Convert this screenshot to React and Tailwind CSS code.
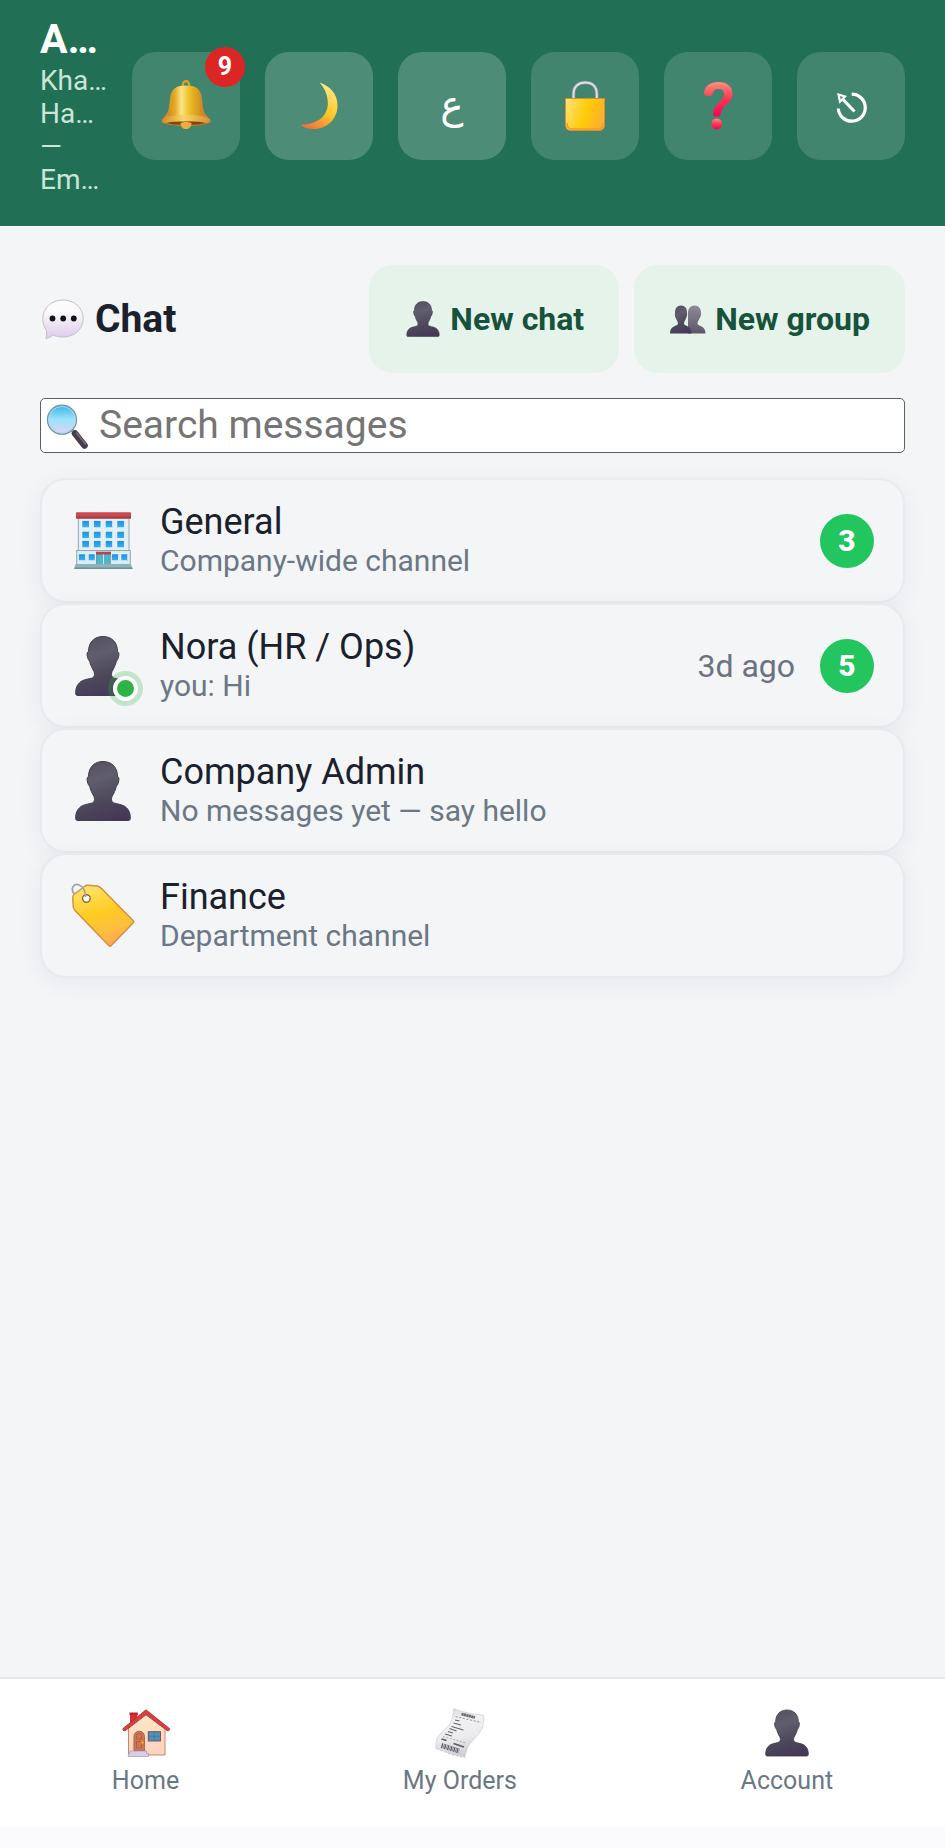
import { useState } from 'react';

const personPath =
  'M32 2.5C40.500 2.500 46.500 8 46.500 17.500C48 18 48.300 20 47.500 23C47 25.500 46 26.500 45.300 27.500C44.500 31 43 34 41 37.500C40.300 39.500 40.300 41.500 41.300 43C43.500 45 50 44.800 54 47.500C58 50.500 59.300 54 59.300 59C59.300 61 58.500 61.500 57 61.500H7C5.500 61.500 4.700 61 4.700 59C4.700 54 6 50.500 10 47.500C14 44.800 20.500 45 22.700 43C23.700 41.500 23.700 39.500 23 37.500C21 34 19.500 31 18.700 27.500C18 26.500 17 25.500 16.500 23C15.700 20 16 18 17.500 17.500C17.500 8 23.500 2.500 32 2.500Z';

// Gradients shared by all the icons below
function IconDefs() {
  return (
    <svg width="0" height="0" className="absolute" aria-hidden="true">
      <defs>
        <linearGradient id="person" x1="0.3" y1="0" x2="0.6" y2="1">
          <stop offset="0" stopColor="#55515f" />
          <stop offset="0.3" stopColor="#605d6d" />
          <stop offset="0.7" stopColor="#4b4759" />
          <stop offset="1" stopColor="#46385a" />
        </linearGradient>
        <linearGradient id="personLight" x1="0" y1="0" x2="0" y2="1">
          <stop offset="0" stopColor="#8d8c95" />
          <stop offset="1" stopColor="#5d5569" />
        </linearGradient>
        <linearGradient id="bell" x1="0" y1="0" x2="1" y2="0">
          <stop offset="0.1" stopColor="#cf8c2c" />
          <stop offset="0.25" stopColor="#e0ab22" />
          <stop offset="0.4" stopColor="#fbe484" />
          <stop offset="0.6" stopColor="#eaba1e" />
          <stop offset="0.9" stopColor="#c98327" />
        </linearGradient>
        <linearGradient id="bellRim" x1="0" y1="0" x2="1" y2="0">
          <stop offset="0" stopColor="#d48b22" />
          <stop offset="0.45" stopColor="#fbd568" />
          <stop offset="1" stopColor="#d68b34" />
        </linearGradient>
        <linearGradient id="moon" x1="0.7" y1="0" x2="0.3" y2="1">
          <stop offset="0" stopColor="#ffe98a" />
          <stop offset="0.55" stopColor="#ffc928" />
          <stop offset="1" stopColor="#f4743b" />
        </linearGradient>
        <linearGradient id="lock" x1="0" y1="0" x2="1" y2="0.3">
          <stop offset="0" stopColor="#ffe37c" />
          <stop offset="0.6" stopColor="#ffcb05" />
          <stop offset="1" stopColor="#fbb32a" />
        </linearGradient>
        <linearGradient id="question" x1="0" y1="0" x2="0" y2="1">
          <stop offset="0" stopColor="#ff8f80" />
          <stop offset="0.45" stopColor="#fb3b55" />
          <stop offset="1" stopColor="#f50057" />
        </linearGradient>
        <linearGradient id="bubble" x1="0" y1="0" x2="0" y2="1">
          <stop offset="0.3" stopColor="#fbfbfb" />
          <stop offset="1" stopColor="#ddc9ec" />
        </linearGradient>
        <linearGradient id="lens" x1="0" y1="0" x2="0" y2="1">
          <stop offset="0" stopColor="#35b7e6" />
          <stop offset="0.5" stopColor="#9de3fb" />
          <stop offset="1" stopColor="#ddd3f5" />
        </linearGradient>
        <linearGradient id="pane" x1="0" y1="0" x2="0" y2="1">
          <stop offset="0" stopColor="#1f8fe0" />
          <stop offset="1" stopColor="#37b0f3" />
        </linearGradient>
        <linearGradient id="tag" x1="0.3" y1="0" x2="0.6" y2="1">
          <stop offset="0" stopColor="#ffe36b" />
          <stop offset="0.45" stopColor="#fecb22" />
          <stop offset="0.75" stopColor="#fdbf3d" />
          <stop offset="1" stopColor="#fba45c" />
        </linearGradient>
        <linearGradient id="wall" x1="0" y1="0" x2="0" y2="1">
          <stop offset="0" stopColor="#fbe8c4" />
          <stop offset="1" stopColor="#fbd2c2" />
        </linearGradient>
        <linearGradient id="paper" x1="0" y1="0" x2="0.2" y2="1">
          <stop offset="0" stopColor="#d6d6d9" />
          <stop offset="0.3" stopColor="#f1f1f3" />
          <stop offset="0.65" stopColor="#ececef" />
          <stop offset="1" stopColor="#cfcfd6" />
        </linearGradient>
      </defs>
    </svg>
  );
}

function PersonIcon({ className }) {
  return (
    <svg viewBox="0 0 64 64" className={className} aria-hidden="true">
      <path d={personPath} fill="url(#person)" stroke="#433e4c" strokeWidth="1" />
    </svg>
  );
}

function PeopleIcon({ className }) {
  return (
    <svg viewBox="0 0 38 38" className={className} aria-hidden="true">
      <path
        d="M25.500 5.500C29.500 5.500 32 8.500 32 12.500C32.500 15 31.500 17 30.500 18.500C29.500 20.500 28.500 22 28.500 24C30 26.500 36.500 25.500 36.500 33.500H19V13C19 8.500 21.500 5.500 25.500 5.500Z"
        fill="url(#personLight)"
      />
      <path
        d="M12 5.500C16 5.500 18 8.500 18 12.500C18.500 15 17.500 17 17 18.500C16 20.500 15 22 15 24C16.500 26.500 22.500 25.500 22.500 33.500H1C1 25.500 7.500 26.500 9 24C9 22 8 20.500 7 18.500C6 17 5.500 15 6 12.500C6 8.500 8 5.500 12 5.500Z"
        fill="url(#person)"
      />
    </svg>
  );
}

function BellIcon() {
  return (
    <svg viewBox="0 0 56 56" className="size-14" aria-hidden="true">
      <circle cx="28" cy="6.500" r="3.200" fill="none" stroke="#d9a02b" strokeWidth="2.400" />
      <ellipse cx="28" cy="43.500" rx="24.500" ry="4.500" fill="#c67a20" />
      <path
        d="M28 7.500C37 7.500 42.500 10.500 43.700 18.500C45 27 44 34 50.500 39.500C45 45.500 11 45.500 5.500 39.500C12 34 11 27 12.300 18.500C13.500 10.500 19 7.500 28 7.500Z"
        fill="url(#bell)"
      />
      <path d="M4 41.500C8 35.500 48 35.500 52.500 41.500C53 44 50 45 48 45C40 42 16 42 8 45C5 45 3.500 44 4 41.500Z" fill="url(#bellRim)" />
      <path d="M9 45C17 43 39 43 47 45C41 47.500 15 47.500 9 45Z" fill="#7d4612" />
      <path d="M22.500 45.500C23 43.500 33 43.500 33.500 45.500C33.500 49 31 51 28 51C25 51 22.500 49 22.500 45.500Z" fill="#efab45" />
    </svg>
  );
}

function MoonIcon() {
  return (
    <svg viewBox="0 0 56 56" className="size-14" aria-hidden="true">
      <path
        d="M28.500 4.500C39 8 46.500 16 46.500 27.500C46.500 41 36 51 23 51C17.500 51 12 49.500 9.700 46.500C25 47 36.500 39 36.800 26C37 17 33.500 10 28.500 4.500Z"
        fill="url(#moon)"
      />
    </svg>
  );
}

function LockIcon() {
  return (
    <svg viewBox="0 0 56 56" className="size-14" aria-hidden="true">
      <path d="M16.500 22V16C16.500 8.500 21.500 4.500 28.200 4.500C35 4.500 39.800 8.500 39.800 16V22" fill="none" stroke="#8b9399" strokeWidth="3.600" />
      <path d="M16.500 22V16C16.500 8.500 21.500 4.500 28.200 4.500C35 4.500 39.800 8.500 39.800 16V22" fill="none" stroke="#dce0e4" strokeWidth="2" />
      <path d="M8.500 20.500H47.500V46C47.500 50.500 45.500 52.500 41.500 52.500H14.500C10.500 52.500 8.500 50.500 8.500 46Z" fill="url(#lock)" stroke="#e38b2a" strokeWidth="1" />
      <path d="M10 45C10 49 12 51 15 51H41C44 51 46 49 46 45" fill="none" stroke="#f29a34" strokeWidth="1.500" />
    </svg>
  );
}

function QuestionIcon() {
  return (
    <svg viewBox="0 0 56 56" className="size-14" aria-hidden="true">
      <path
        d="M14 15.500C14.500 8 20 4 28.500 4C37 4 42.500 8.500 42.500 15.500C42.500 22 38.500 24.500 34.500 28.500C31 32 31 34 30.500 36.500C30 39.500 23.500 39.500 23 36.500C23 30.500 26 27.500 29.500 24C32 21.500 34 19.500 34 16C34 12.500 32 11 28.500 11C24.500 11 23.500 13 22.500 16C21.500 19 14 18.500 14 15.500Z"
        fill="url(#question)"
      />
      <circle cx="26.700" cy="46" r="5.400" fill="url(#question)" />
    </svg>
  );
}

function ExitIcon() {
  return (
    <svg viewBox="0 0 56 56" className="size-14" fill="none" stroke="#fff" strokeWidth="3.200" aria-hidden="true">
      <path d="M28.700 16.200A13.500 13.500 0 1 1 15.300 30.500" />
      <path d="M31.500 33.500L20 21.500" />
      <path d="M15.500 16.500L22 18.500L17 23.500Z" strokeWidth="2.200" />
    </svg>
  );
}

function BubbleIcon() {
  return (
    <svg viewBox="0 0 46 46" className="size-[46px]" aria-hidden="true">
      <path
        d="M23 4C34.500 4 43.200 12 43.200 22.500C43.200 33 34.500 41 23 41C19 41 16 40.300 13 39C11 40.800 8.500 42.300 6 42.500C6.600 40 6.800 37 6.500 34.500C4 31 2.800 27 2.800 22.500C2.800 12 11.500 4 23 4Z"
        fill="url(#bubble)"
        stroke="#c5bfca"
        strokeWidth="1"
      />
      <circle cx="12.500" cy="22.500" r="2.900" fill="#151217" />
      <circle cx="23.200" cy="22.500" r="2.900" fill="#151217" />
      <circle cx="33.800" cy="22.500" r="2.900" fill="#151217" />
    </svg>
  );
}

function SearchIcon() {
  return (
    <svg viewBox="0 0 48 48" className="size-12" aria-hidden="true">
      <path d="M28.500 27.500L33 32" stroke="#9b9ca8" strokeWidth="3.500" />
      <path d="M32 31.500L41.500 43.500" stroke="#463d4c" strokeWidth="6.500" strokeLinecap="round" />
      <path d="M33.500 31L42.500 42" stroke="#766d7d" strokeWidth="1.500" strokeLinecap="round" />
      <circle cx="19" cy="17.700" r="14.500" fill="url(#lens)" stroke="#6499b3" strokeWidth="1.200" />
      <circle cx="19" cy="17.700" r="13.200" fill="none" stroke="#c4d4df" strokeWidth="0.900" />
    </svg>
  );
}

function BuildingIcon() {
  return (
    <svg viewBox="0 0 64 64" className="size-16" aria-hidden="true">
      <rect x="7.300" y="9" width="50.700" height="33" fill="#e3eff3" stroke="#93a8b1" strokeWidth="1" />
      <rect x="5" y="3.300" width="55" height="6.200" rx="1" fill="#c94a50" />
      <rect x="5" y="7.500" width="55" height="2" fill="#a83b42" />
      {[11.7, 22.3, 31.7].map((y) =>
        [11, 22.7, 34.3, 46].map((x) => (
          <rect key={`${x}-${y}`} x={x} y={y} width="7.200" height="7" fill="url(#pane)" stroke="#fff" strokeWidth="0.500" />
        ))
      )}
      <rect x="5.700" y="41.500" width="53.600" height="14" fill="#dcebef" stroke="#8fa9b0" strokeWidth="1" />
      {[7.7, 17.3, 40.7, 50].map((x) => (
        <rect key={x} x={x} y="45" width="6.700" height="6.700" fill="url(#pane)" stroke="#fff" strokeWidth="0.500" />
      ))}
      <rect x="25.700" y="45" width="13.500" height="10.500" fill="#4fb6cf" stroke="#4c8791" strokeWidth="0.800" />
      <path d="M32.500 45V55" stroke="#c5edf3" strokeWidth="1" />
      <rect x="25" y="42.700" width="15" height="2.600" fill="#bc4148" />
      <path d="M4.500 55H60L61.500 59.700H3.300Z" fill="#92b3b6" />
      <path d="M3.300 58.500H61.500V60H3.300Z" fill="#6f9296" />
    </svg>
  );
}

function TagIcon() {
  return (
    <svg viewBox="0 0 64 64" className="size-16 overflow-visible" aria-hidden="true">
      <path
        d="M16.500 1.300L26 2C28 2.200 29 3 30.500 4.500L62.500 37C63 37.600 63 38 62.500 38.600L40 61.700C39.300 62.400 38.700 62.400 38 61.700L4 26.500C2.800 25.200 2.500 24.500 2.300 23L1.700 14C1.600 12 2 11 3.500 10L13.500 2.500C14.500 1.700 15 1.200 16.500 1.300Z"
        fill="url(#tag)"
        stroke="#d18f3c"
        strokeWidth="1.400"
      />
      <circle cx="15.400" cy="14.500" r="3.800" fill="#fff" stroke="#936332" strokeWidth="1.400" />
      <path d="M3 10C-1 4 3 -0.500 7.500 0.700C12 2 14.500 7 14.500 13" fill="none" stroke="#a0a3a6" strokeWidth="1.700" />
    </svg>
  );
}

function HouseIcon() {
  return (
    <svg viewBox="0 0 50 50" className="size-[50px]" aria-hidden="true">
      <rect x="9" y="5" width="7.300" height="15" fill="#d92f33" />
      <rect x="8.500" y="4.500" width="8.300" height="2.500" fill="#b8262e" />
      <path d="M7.500 20L25 5L44 20V47H7.500Z" fill="url(#wall)" stroke="#c58765" strokeWidth="1" />
      <path d="M25 1.800L48.500 20.500C49 22 48 23.200 46 22.500L25 6.800L4.500 22.500C2 23.300 1.500 22 2 20.500Z" fill="#d93f40" stroke="#aa2830" strokeWidth="0.800" />
      <path d="M13 43V28.500C13 21.500 23.400 21.500 23.400 28.500V43Z" fill="#cf7553" stroke="#a5614a" strokeWidth="1" />
      <path d="M15.500 31V27.500C15.500 25 20.500 25 20.500 27.500V31ZM15.500 33.500H20.500V40H15.500Z" fill="none" stroke="#a9573b" strokeWidth="0.800" />
      <circle cx="21.500" cy="34.500" r="1.300" fill="#f5b324" />
      <rect x="27.300" y="23.700" width="12.200" height="9.300" fill="#3d98c5" stroke="#914c42" strokeWidth="1" />
      <path d="M33.400 24V33M27.500 28.300H39.500" stroke="#7c6273" strokeWidth="0.800" />
      <path d="M9 43H25.500V45.500H27.500V48.500H7.300V45.500H9Z" fill="#d9cfe5" stroke="#a294b5" strokeWidth="0.700" />
    </svg>
  );
}

function ReceiptIcon() {
  return (
    <svg viewBox="0 0 50 50" className="size-[50px]" aria-hidden="true">
      <path
        d="M18.800 0.800C28 4.500 40 6.500 48.800 7.200C49 14 48.500 19 45 24C40 31 33.500 36 32 41C31 44 30.500 47 29.500 50L27.500 48L26 49.500L24 47.500L22 48.500L20 46.500L18 47.500L16 45.500L14 46L12 44L10 44.500L8 42.500L6 43L4 41L1 41C0.500 36 1 32 3.500 28C7 23 13 20 15.500 15C17.500 10.500 18 6 18.800 0.800Z"
        fill="url(#paper)"
        stroke="#c4c4ca"
        strokeWidth="0.600"
      />
      <path d="M26.500 6L40 9.500" stroke="#6a6a6e" strokeWidth="2.800" strokeDasharray="2.200 0.300" />
      <path d="M20.500 8.500L46 14.500" stroke="#8b8b90" strokeWidth="0.900" strokeDasharray="2.200 1.500" />
      <path d="M20 12L24.500 13M18.500 15L26 17M16.500 18.500L28.500 22M14.500 20.500L21.500 23M13 23.500L18 25M10 26L17 28" stroke="#66666b" strokeWidth="1.200" />
      <path d="M8 28.500L31 35" stroke="#9c9ca2" strokeWidth="0.800" strokeDasharray="2 1.500" />
      <path d="M6.500 31L11.500 32.500M18.500 35.500L29 39" stroke="#5a5a5f" strokeWidth="1.500" />
      <path d="M6.500 37.500L24 43" stroke="#5c5c63" strokeWidth="5" strokeDasharray="1.300 0.700 0.600 0.600" />
    </svg>
  );
}

const headerButtons = [
  { label: 'Notifications', icon: <BellIcon />, bg: 'bg-white/15', badge: 9 },
  { label: 'Dark mode', icon: <MoonIcon />, bg: 'bg-white/20' },
  { label: 'Arabic', icon: <span lang="ar">ع</span>, bg: 'bg-white/20' },
  { label: 'Lock', icon: <LockIcon />, bg: 'bg-white/15' },
  { label: 'Help', icon: <QuestionIcon />, bg: 'bg-white/15' },
  { label: 'Sign out', icon: <ExitIcon />, bg: 'bg-white/15' },
];

const chats = [
  { name: 'General', preview: 'Company-wide channel', icon: <BuildingIcon />, unread: 3 },
  { name: 'Nora (HR / Ops)', preview: 'you: Hi', icon: <PersonIcon className="size-16" />, online: true, time: '3d ago', unread: 5 },
  { name: 'Company Admin', preview: 'No messages yet — say hello', icon: <PersonIcon className="size-16" /> },
  { name: 'Finance', preview: 'Department channel', icon: <TagIcon /> },
];

const tabs = [
  { label: 'Home', icon: <HouseIcon /> },
  { label: 'My Orders', icon: <ReceiptIcon /> },
  { label: 'Account', icon: <PersonIcon className="size-[50px]" /> },
];

function Header() {
  return (
    <header className="flex items-center gap-[25px] bg-[#217055] px-10 pt-[15px] pb-[30px] text-white">
      <div className="min-w-0 flex-1 whitespace-nowrap">
        <p className="text-[41px] leading-[49px] font-bold">A…</p>
        <div className="text-[28px] leading-[33px] text-[#c9e6d8]">
          <p>Kha…</p>
          <p>Ha…</p>
          <p>—</p>
          <p>Em…</p>
        </div>
      </div>
      {headerButtons.map((b) => (
        <button
          key={b.label}
          type="button"
          aria-label={b.label}
          className={`relative flex size-[108px] shrink-0 items-center justify-center rounded-3xl text-[39px] ${b.bg}`}
        >
          {b.icon}
          {b.badge && (
            <span className="absolute -top-[5px] -right-[5px] flex size-10 items-center justify-center rounded-full bg-[#dc2626] text-[25px] leading-none font-bold">
              {b.badge}
            </span>
          )}
        </button>
      ))}
    </header>
  );
}

function ChatRow({ chat }) {
  return (
    <li>
      <button
        type="button"
        className="flex h-[125px] w-full items-center gap-[25px] rounded-[26px] border-2 border-[#e8eaee] bg-[#f3f5f7] px-[29px] text-left shadow-[0_5px_24px_rgba(30,35,70,0.06)]"
      >
        <span className="relative shrink-0">
          {chat.icon}
          {chat.online && (
            <span className="absolute -right-[3px] -bottom-[3px] size-[25px] rounded-full border-4 border-white bg-[#2fb344] shadow-[0_0_0_5px_rgba(47,179,68,0.25)]" />
          )}
        </span>
        <span className="flex min-w-0 flex-1 flex-col">
          <span className="truncate text-[36px] leading-[41px] text-[#1a202c]">{chat.name}</span>
          <span className="truncate text-[30px] leading-9 text-[#6b7785]">{chat.preview}</span>
        </span>
        {chat.time && <span className="text-[32px] text-[#6b7280]">{chat.time}</span>}
        {chat.unread && (
          <span className="flex size-[54px] items-center justify-center rounded-full bg-[#22c55e] text-[30px] leading-none font-extrabold text-white">
            {chat.unread}
          </span>
        )}
      </button>
    </li>
  );
}

export default function App() {
  const [query, setQuery] = useState('');

  return (
    <div className="flex min-h-screen flex-col bg-[#f3f5f7] font-[Roboto,'DejaVu_Sans',sans-serif]">
      <IconDefs />
      <Header />

      <main className="flex-1 px-10 pt-[39px]">
        <div className="flex items-center justify-between">
          <h1 className="flex items-center gap-[9px] text-[39px] font-bold text-[#1a202c]">
            <BubbleIcon />
            Chat
          </h1>
          <div className="flex gap-[15px] text-[32px] font-bold text-[#17523a]">
            <button type="button" className="flex h-[108px] items-center gap-2 rounded-3xl bg-[#e5f3eb] px-[35px]">
              <PersonIcon className="size-[38px]" />
              New chat
            </button>
            <button type="button" className="flex h-[108px] items-center gap-2 rounded-3xl bg-[#e5f3eb] px-[35px]">
              <PeopleIcon className="size-[38px]" />
              New group
            </button>
          </div>
        </div>

        <div className="relative mt-[25px] flex items-center">
          <input
            type="search"
            aria-label="Search messages"
            placeholder="Search messages"
            value={query}
            onChange={(e) => setQuery(e.target.value)}
            className="h-[55px] w-full rounded-[5px] border border-[#5f5f5f] bg-white pl-[58px] text-[39px] text-black placeholder-[#757575]"
          />
          {!query && (
            <span className="pointer-events-none absolute left-[3px]">
              <SearchIcon />
            </span>
          )}
        </div>

        <ul className="mt-[25px]">
          {chats.map((chat) => (
            <ChatRow key={chat.name} chat={chat} />
          ))}
        </ul>
      </main>

      <nav className="flex justify-around border-t-2 border-[#e5e8ea] bg-white pt-[29px] pb-[30px]">
        {tabs.map((t) => (
          <a key={t.label} href="#" className="flex flex-col items-center gap-2 text-[25px] leading-[30px] text-[#6b7785]">
            {t.icon}
            {t.label}
          </a>
        ))}
      </nav>
      <div className="h-[22px] bg-[#fbfbfd]" />
    </div>
  );
}
